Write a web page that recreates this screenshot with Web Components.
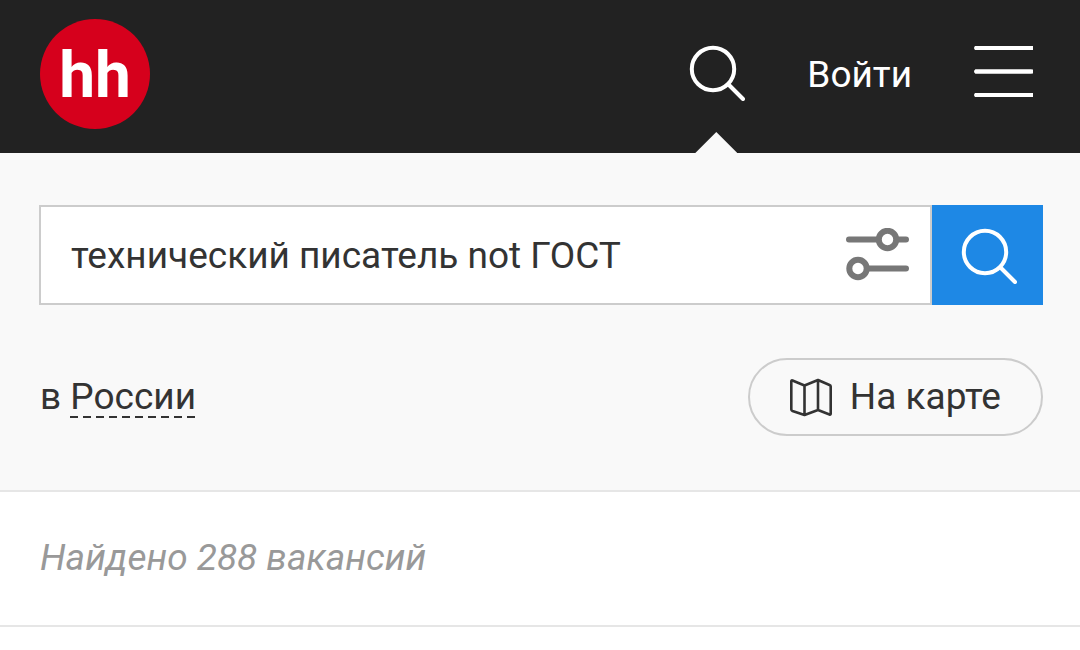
<!DOCTYPE html>
<html lang="ru">
<head>
<meta charset="utf-8">
<meta name="viewport" content="width=device-width, initial-scale=1">
<title>Поиск вакансий</title>
<style>
  body { margin: 0; background: #fff; color: #333; font: 37px/44px Roboto, "Liberation Sans", sans-serif; }
</style>
</head>
<body>
<site-header><span slot="login">Войти</span></site-header>
<main>
  <search-panel query="технический писатель not ГОСТ">
    <span slot="region">России</span>
    <span slot="map">На карте</span>
  </search-panel>
  <results-summary>Найдено 288 вакансий</results-summary>
</main>

<script>
const icons = {
  search: '<svg width="56" height="56" viewBox="0 0 56 56" fill="none" stroke="currentColor" stroke-width="4"><circle cx="24" cy="24" r="21.2"/><path d="M39.5 39.5L54 54" stroke-linecap="round"/></svg>',
  menu: '<svg width="60" height="58" viewBox="0 0 60 58" fill="none" stroke="currentColor" stroke-width="4"><path d="M1 3H59M1 26.500H59M1 50H59" stroke-linecap="butt"/><path d="M2 3H57M2 26.500H57M2 50H57" stroke-linecap="round"/></svg>',
  filters: '<svg width="64" height="54" viewBox="0 0 64 54" fill="none" stroke="currentColor" stroke-width="6" stroke-linecap="round"><path d="M3 11.500H31M51 11.500H60M23 40.500H60"/><circle cx="41.500" cy="11.500" r="8.700"/><circle cx="12" cy="40.500" r="8.700"/></svg>',
  map: '<svg width="42" height="40" viewBox="0 0 42 40" fill="none" stroke="currentColor" stroke-width="2.600" stroke-linejoin="round"><path d="M2.500 3.500Q1.300 3 1.300 4.500V32.500Q1.300 33.500 2.500 34L14.500 38L28 33L39.500 37.500Q40.700 38 40.700 36.500V9.500Q40.700 8.500 39.500 8L28 3L14.500 8.500ZM14.500 8.500V38M28 3V33"/></svg>'
};

class UiIcon extends HTMLElement {
  connectedCallback() {
    if (this.shadowRoot) return;
    this.attachShadow({ mode: 'open' }).innerHTML =
      `<style>:host{display:block;flex:none}svg{display:block}</style>${icons[this.getAttribute('name')]}`;
  }
}
customElements.define('ui-icon', UiIcon);

class SiteHeader extends HTMLElement {
  constructor() {
    super();
    this.attachShadow({ mode: 'open' }).innerHTML = `
      <style>
        :host { display: block; background: #222; color: #fff; }
        header { display: flex; align-items: center; gap: 62px; padding: 0 46px 6px 40px; }
        .logo { box-sizing: border-box; display: flex; align-items: center; justify-content: center; width: 110px; height: 110px;
          margin: 19px auto 18px 0; padding-top: 4px; border-radius: 50%; background: #d6001c; color: #fff;
          font-size: 64px; line-height: 80px; font-weight: 700; text-decoration: none; }
        button { border: 0; padding: 0; background: none; color: inherit; font: inherit; }
        .search { position: relative; align-self: stretch; display: flex; align-items: center; padding-bottom: 2px; }
        .search::after { content: ""; position: absolute; left: 6px; bottom: -6px;
          width: 42px; height: 21px; background: #f9f9f9; clip-path: polygon(50% 0, 100% 100%, 0 100%); }
        .login { color: inherit; text-decoration: none; padding-top: 2px; }
      </style>
      <header>
        <a class="logo" href="#" aria-label="hh">hh</a>
        <button class="search" type="button" aria-label="Поиск"><ui-icon name="search"></ui-icon></button>
        <a class="login" href="#"><slot name="login"></slot></a>
        <button type="button" aria-label="Меню"><ui-icon name="menu"></ui-icon></button>
      </header>`;
  }
}
customElements.define('site-header', SiteHeader);

class SearchPanel extends HTMLElement {
  constructor() {
    super();
    this.attachShadow({ mode: 'open' }).innerHTML = `
      <style>
        :host { display: block; background: #f9f9f9; border-bottom: 2px solid #e6e6e6; padding: 52px 37px 54px 39px; }
        form { display: flex; height: 100px; }
        .field { flex: 1; min-width: 0; box-sizing: border-box; display: flex; align-items: center;
          background: #fff; border: 2px solid #ccc; padding: 0 20px 0 30px; }
        input { flex: 1; min-width: 0; height: 60px; border: 0; padding: 0; outline: 0; background: none; color: inherit; font: inherit; }
        button { border: 0; padding: 0; background: none; color: inherit; font: inherit; }
        .filters { color: #777; }
        .submit { box-sizing: border-box; display: flex; align-items: center; justify-content: center; width: 111px;
          padding: 2px 0 0 2px; background: #1e88e5; color: #fff; }
        .row { display: flex; align-items: center; justify-content: space-between; margin-top: 53px; padding-left: 1px; }
        p { margin: 0; }
        a { color: inherit; text-decoration: none;
          background: repeating-linear-gradient(90deg, #333 0 8px, transparent 8px 13px) left bottom / 100% 2px no-repeat; }
        .map { box-sizing: border-box; display: flex; align-items: center; gap: 18px; height: 78px;
          padding: 0 40px; border: 2px solid #ccc; border-radius: 39px; }
      </style>
      <form role="search">
        <div class="field">
          <input type="text" aria-label="Поиск вакансий">
          <button class="filters" type="button" aria-label="Фильтры"><ui-icon name="filters"></ui-icon></button>
        </div>
        <button class="submit" type="submit" aria-label="Найти"><ui-icon name="search"></ui-icon></button>
      </form>
      <div class="row">
        <p>в <a href="#"><slot name="region"></slot></a></p>
        <button class="map" type="button"><ui-icon name="map"></ui-icon><slot name="map"></slot></button>
      </div>`;
  }
  connectedCallback() {
    this.shadowRoot.querySelector('input').value = this.getAttribute('query') || '';
  }
}
customElements.define('search-panel', SearchPanel);

class ResultsSummary extends HTMLElement {
  constructor() {
    super();
    this.attachShadow({ mode: 'open' }).innerHTML = `
      <style>
        :host { display: block; padding: 44px 40px 45px; border-bottom: 2px solid #e6e6e6; color: #999; font-style: italic; }
        p { margin: 0; }
      </style>
      <p><slot></slot></p>`;
  }
}
customElements.define('results-summary', ResultsSummary);
</script>
</body>
</html>
